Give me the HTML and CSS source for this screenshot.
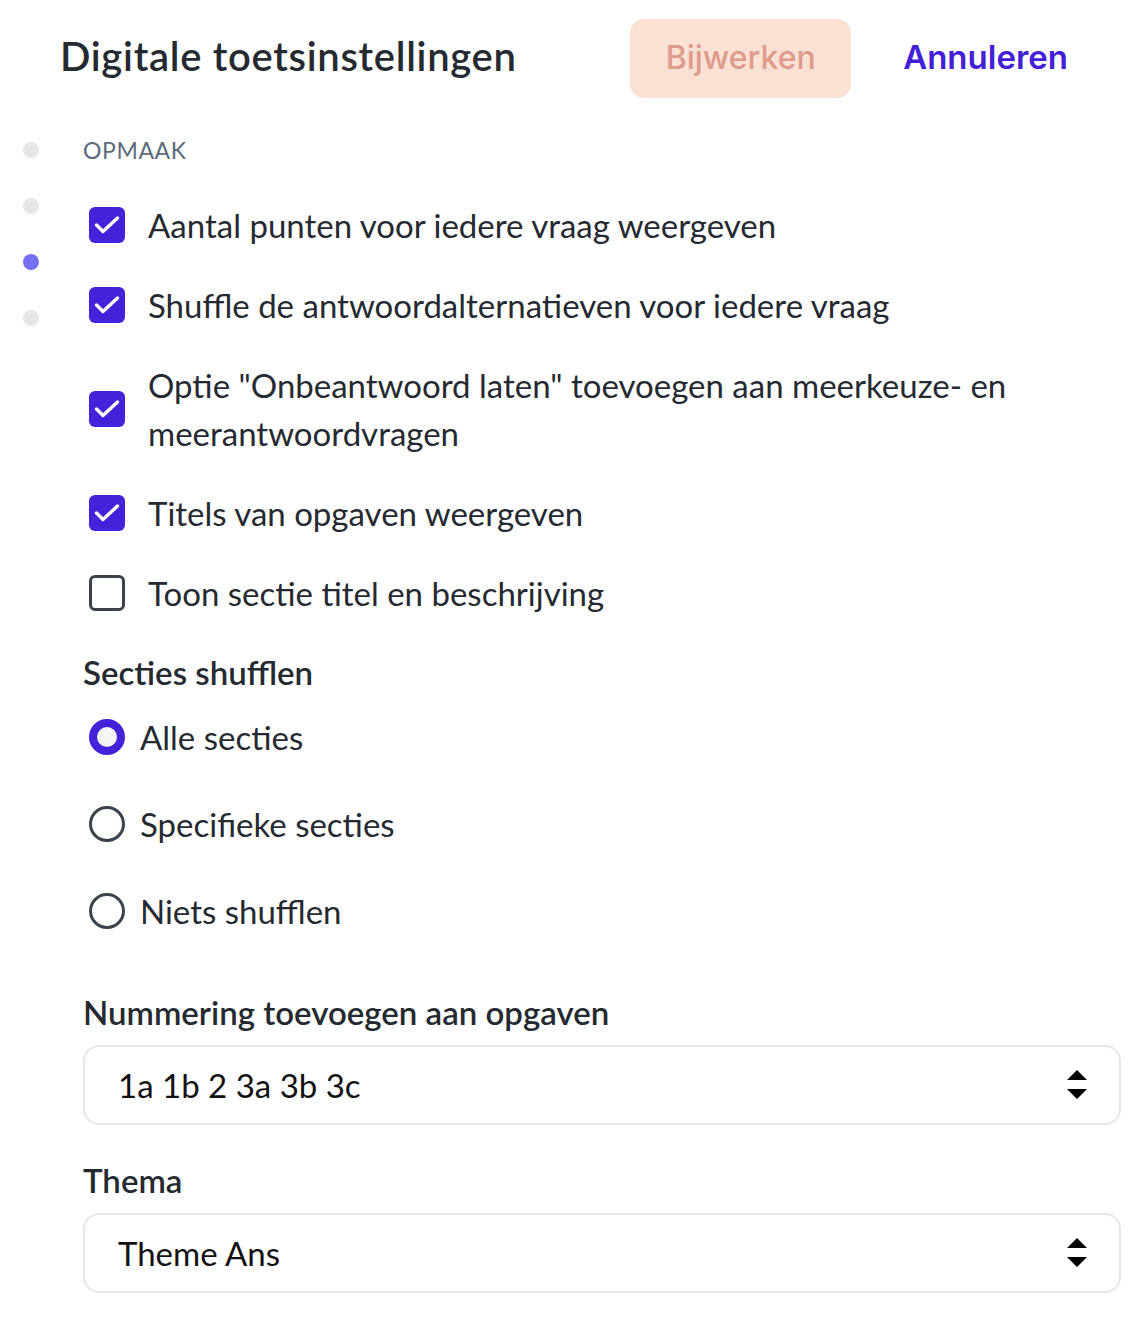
FILE: index.html
```html
<!DOCTYPE html>
<html lang="nl">
<head>
  <meta charset="UTF-8">
  <title>Digitale toetsinstellingen</title>
  <link rel="stylesheet" href="styles.css">
</head>
<body>
  <header class="topbar">
    <h1 class="title">Digitale toetsinstellingen</h1>
    <div class="actions">
      <button class="btn-update" disabled>Bijwerken</button>
      <a class="btn-cancel" href="#">Annuleren</a>
    </div>
  </header>

  <div class="layout">
    <nav class="steps">
      <span class="dot"></span>
      <span class="dot"></span>
      <span class="dot active"></span>
      <span class="dot"></span>
    </nav>

    <main class="content">
      <div class="section-label">OPMAAK</div>

      <div class="checks">
        <label class="check-row">
          <span class="box checked"><svg viewBox="0 0 36 36"><path d="M7.5 18l6.5 6.5L28.5 11"/></svg></span>
          <span class="check-text">Aantal punten voor iedere vraag weergeven</span>
        </label>
        <label class="check-row">
          <span class="box checked"><svg viewBox="0 0 36 36"><path d="M7.5 18l6.5 6.5L28.5 11"/></svg></span>
          <span class="check-text">Shuffle de antwoordalternatieven voor iedere vraag</span>
        </label>
        <label class="check-row">
          <span class="box checked"><svg viewBox="0 0 36 36"><path d="M7.5 18l6.5 6.5L28.5 11"/></svg></span>
          <span class="check-text">Optie "Onbeantwoord laten" toevoegen aan meerkeuze- en meerantwoordvragen</span>
        </label>
        <label class="check-row">
          <span class="box checked"><svg viewBox="0 0 36 36"><path d="M7.5 18l6.5 6.5L28.5 11"/></svg></span>
          <span class="check-text">Titels van opgaven weergeven</span>
        </label>
        <label class="check-row">
          <span class="box"></span>
          <span class="check-text">Toon sectie titel en beschrijving</span>
        </label>
      </div>

      <h3 class="field-title shuffle-title">Secties shufflen</h3>
      <div class="radios">
        <label class="radio-row">
          <span class="radio selected"></span>
          <span class="radio-text">Alle secties</span>
        </label>
        <label class="radio-row">
          <span class="radio"></span>
          <span class="radio-text">Specifieke secties</span>
        </label>
        <label class="radio-row">
          <span class="radio"></span>
          <span class="radio-text">Niets shufflen</span>
        </label>
      </div>

      <h3 class="field-title numbering-title">Nummering toevoegen aan opgaven</h3>
      <div class="select">
        <span class="select-value">1a 1b 2 3a 3b 3c</span>
        <svg class="select-arrows" viewBox="0 0 20 30"><path d="M10 0L20 10H0z M0 19H20L10 29z"/></svg>
      </div>

      <h3 class="field-title theme-title">Thema</h3>
      <div class="select">
        <span class="select-value">Theme Ans</span>
        <svg class="select-arrows" viewBox="0 0 20 30"><path d="M10 0L20 10H0z M0 19H20L10 29z"/></svg>
      </div>
    </main>
  </div>
</body>
</html>
```

FILE: styles.css
```css
body {
  font-family: 'Lato', 'Open Sans', sans-serif;
  background-color: #ffffff;
  color: #252a31;
  margin: 0;
  padding: 0;
}
.topbar {
  display: flex;
  align-items: center;
  justify-content: space-between;
  padding: 18px 78px 0 60px;
  height: 80px;
}
.title {
  font-size: 40px;
  font-weight: 600;
  letter-spacing: 0.7px;
  margin: 0;
  padding-bottom: 4px;
}
.actions {
  display: flex;
  align-items: center;
  gap: 52px;
}
.btn-update {
  font-family: 'Inter', 'Open Sans', sans-serif;
  background-color: #fae1d3;
  color: #de9a8c;
  border: none;
  border-radius: 14px;
  width: 221px;
  height: 79px;
  font-size: 32px;
  font-weight: 500;
  padding: 0 0 2px;
}
.btn-cancel {
  font-family: 'Inter', 'Open Sans', sans-serif;
  color: #4320d8;
  text-decoration: none;
  font-size: 33px;
  font-weight: 600;
  padding-bottom: 2px;
}
.layout {
  display: flex;
  padding-top: 37px;
}
.steps {
  width: 83px;
  display: flex;
  flex-direction: column;
  padding: 7px 0 0 23px;
  box-sizing: border-box;
  gap: 40px;
}
.dot {
  width: 16px;
  height: 16px;
  border-radius: 50%;
  background-color: #e6e6e6;
}
.dot.active {
  background-color: #7470f0;
}
.content {
  flex: 1;
  padding-right: 25px;
  padding-bottom: 30px;
}
.section-label {
  font-size: 23px;
  line-height: 30px;
  color: #5c6b7a;
  letter-spacing: 0.6px;
}
.checks {
  display: flex;
  flex-direction: column;
  gap: 32px;
  margin-top: 36px;
}
.check-row {
  display: flex;
  align-items: center;
  padding-left: 6px;
}
.box {
  width: 36px;
  height: 36px;
  flex-shrink: 0;
  box-sizing: border-box;
  border: 3px solid #3a4148;
  border-radius: 6px;
  margin-right: 23px;
}
.box.checked {
  background-color: #4521d9;
  border: none;
}
.box svg {
  display: block;
  width: 36px;
  height: 36px;
  fill: none;
  stroke: #ffffff;
  stroke-width: 3.4;
  stroke-linecap: round;
  stroke-linejoin: round;
}
.check-text {
  font-size: 33px;
  line-height: 48px;
  max-width: 880px;
}
.field-title {
  font-size: 33px;
  font-weight: 600;
  line-height: 40px;
  margin: 0;
}
.shuffle-title {
  margin-top: 35px;
}
.radios {
  display: flex;
  flex-direction: column;
  gap: 39px;
  margin-top: 21px;
}
.radio-row {
  display: flex;
  align-items: center;
  padding-left: 6px;
  height: 48px;
}
.radio {
  width: 36px;
  height: 36px;
  box-sizing: border-box;
  border-radius: 50%;
  border: 3px solid #3b434b;
  margin-right: 15px;
}
.radio.selected {
  border: 8px solid #4521d9;
  background-color: #f3f4f6;
}
.radio-text {
  font-size: 33px;
}
.numbering-title {
  margin-top: 57px;
}
.theme-title {
  margin-top: 35px;
}
.select {
  display: flex;
  align-items: center;
  justify-content: space-between;
  height: 80px;
  box-sizing: border-box;
  margin-top: 13px;
  border: 2px solid #e6e6e6;
  border-radius: 16px;
  padding: 0 32px 0 33px;
}
.select-value {
  font-size: 33px;
  color: #111111;
}
.select-arrows {
  width: 20px;
  height: 30px;
  fill: #000000;
}
```
